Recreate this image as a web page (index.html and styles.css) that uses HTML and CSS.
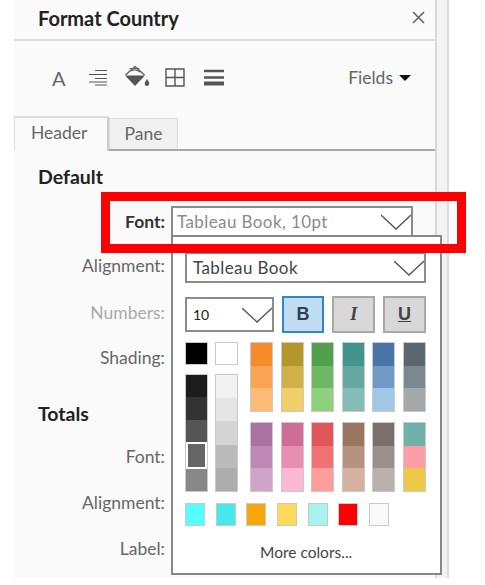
FILE: index.html
```html
<!DOCTYPE html>
<html lang="en">
<head>
    <meta charset="UTF-8">
    <title>Format Country</title>
    <link rel="stylesheet" href="styles.css">
</head>
<body>
<div class="shell">
    <div class="panel">
        <div class="panel-title">
            <h1>Format Country</h1>
            <svg class="close" width="13" height="13" viewBox="0 0 13 13"><path d="M1 1l11 11M12 1L1 12" stroke="#666" stroke-width="1.6" fill="none"/></svg>
        </div>
        <div class="toolbar">
            <span class="tool-a">A</span>
            <svg class="tool-align" width="18" height="17" viewBox="0 0 18 17"><path d="M6 1.500h12M0 5.500h18M6 9.500h12M0 13h18M6 16h12" stroke="#555" stroke-width="1.200" fill="none"/></svg>
            <svg class="tool-fill" width="26" height="22" viewBox="0 0 26 22"><path d="M1.500 10L11 1.500 20.500 10" fill="none" stroke="#666" stroke-width="1.500"/><path d="M5.500 3.500l10 0M7 6c3-2 6-1.500 9 1" fill="none" stroke="#666" stroke-width="1.200"/><path d="M1 10.500h20L11 21z" fill="#555"/><path d="M23 14c1.500 2.500 2.300 3.500 2.300 4.800a2.300 2.300 0 0 1-4.600 0c0-1.300.8-2.300 2.300-4.800z" fill="#555"/></svg>
            <svg class="tool-grid" width="20" height="19" viewBox="0 0 20 19"><path d="M1 1h18v17H1zM10 1v17M1 9.500h18" fill="none" stroke="#555" stroke-width="1.400"/></svg>
            <svg class="tool-lines" width="20" height="17" viewBox="0 0 20 17"><path d="M0 2h20M0 8.500h20" stroke="#555" stroke-width="2.400"/><path d="M0 14.500h20" stroke="#555" stroke-width="4"/></svg>
            <span class="fields">Fields</span>
            <svg class="fields-arrow" width="12" height="6" viewBox="0 0 12 6"><path d="M0 0h12L6 6z" fill="#111"/></svg>
        </div>
        <div class="tabs">
            <div class="tab active">Header</div>
            <div class="tab">Pane</div>
        </div>
        <div class="form">
            <h2 class="section-default">Default</h2>
            <div class="row row-font">
                <label class="strong">Font:</label>
                <div class="select font-select">Tableau Book, 10pt
                    <svg class="chevron" width="30" height="16" viewBox="0 0 30 16"><path d="M0 1l15 14L30 1" fill="none" stroke="#555" stroke-width="1.300"/></svg>
                </div>
            </div>
            <div class="row row-align"><label>Alignment:</label></div>
            <div class="row row-numbers"><label class="muted">Numbers:</label></div>
            <div class="row row-shading"><label>Shading:</label></div>
            <h2 class="section-totals">Totals</h2>
            <div class="row row-tfont"><label>Font:</label></div>
            <div class="row row-talign"><label>Alignment:</label></div>
            <div class="row row-tlabel"><label>Label:</label></div>
        </div>
    </div>
    <div class="strip"></div>
</div>

<div class="popup">
    <div class="select family-select">Tableau Book
        <svg class="chevron" width="30" height="16" viewBox="0 0 30 16"><path d="M0 1l15 14L30 1" fill="none" stroke="#555" stroke-width="1.300"/></svg>
    </div>
    <div class="style-row">
        <div class="select size-select">10
            <svg class="chevron" width="30" height="16" viewBox="0 0 30 16"><path d="M0 1l15 14L30 1" fill="none" stroke="#555" stroke-width="1.300"/></svg>
        </div>
        <div class="style-btn on bold">B</div>
        <div class="style-btn italic">I</div>
        <div class="style-btn under">U</div>
    </div>
    <div class="colors">
        <div class="greys">
            <div class="swatch black"></div>
            <div class="swatch white"></div>
            <div class="stack tall">
                <i class="g1"></i><i class="g2"></i><i class="g3"></i><i class="g4 picked"></i><i class="g5"></i>
            </div>
            <div class="stack tall">
                <i class="l1"></i><i class="l2"></i><i class="l3"></i><i class="l4"></i><i class="l5"></i>
            </div>
        </div>
        <div class="palette">
            <div class="stack"><i class="p1a"></i><i class="p1b"></i><i class="p1c"></i></div>
            <div class="stack"><i class="p2a"></i><i class="p2b"></i><i class="p2c"></i></div>
            <div class="stack"><i class="p3a"></i><i class="p3b"></i><i class="p3c"></i></div>
            <div class="stack"><i class="p4a"></i><i class="p4b"></i><i class="p4c"></i></div>
            <div class="stack"><i class="p5a"></i><i class="p5b"></i><i class="p5c"></i></div>
            <div class="stack"><i class="p6a"></i><i class="p6b"></i><i class="p6c"></i></div>
            <div class="stack"><i class="p7a"></i><i class="p7b"></i><i class="p7c"></i></div>
            <div class="stack"><i class="p8a"></i><i class="p8b"></i><i class="p8c"></i></div>
            <div class="stack"><i class="p9a"></i><i class="p9b"></i><i class="p9c"></i></div>
            <div class="stack"><i class="p10a"></i><i class="p10b"></i><i class="p10c"></i></div>
            <div class="stack"><i class="p11a"></i><i class="p11b"></i><i class="p11c"></i></div>
            <div class="stack"><i class="p12a"></i><i class="p12b"></i><i class="p12c"></i></div>
        </div>
    </div>
    <div class="recent">
        <div class="chip r1"></div>
        <div class="chip r2"></div>
        <div class="chip r3"></div>
        <div class="chip r4"></div>
        <div class="chip r5"></div>
        <div class="chip r6"></div>
        <div class="chip r7"></div>
    </div>
    <div class="more">More colors...</div>
</div>

<div class="highlight"></div>
</body>
</html>
```

FILE: styles.css
```css
* {
    box-sizing: border-box;
    margin: 0;
    padding: 0;
}

body {
    font-family: 'Lato', 'Liberation Sans', sans-serif;
    width: 485px;
    height: 585px;
    overflow: hidden;
    background-color: #fff;
    color: #666;
    position: relative;
}

.shell {
    display: flex;
    margin-left: 14px;
    height: 578px;
}

.panel {
    width: 423px;
    background-color: #fafafa;
    border-right: 2px solid #d8d8d8;
}

.strip {
    width: 12px;
    background-color: #f3f3f3;
    border-right: 2px solid #dcdcdc;
}

.panel-title {
    height: 41px;
    display: flex;
    justify-content: space-between;
    align-items: center;
    padding: 0 10px 4px 24px;
    border-bottom: 2px solid #dedede;
}

.panel-title h1 {
    font-size: 20px;
    font-weight: 700;
    color: #222;
}

/* toolbar */
.toolbar {
    height: 76px;
    display: flex;
    align-items: center;
    padding: 0 24px 3px 38px;
}

.tool-a {
    font-size: 20px;
    width: 12px;
    color: #666;
}

.tool-align { margin-left: 25px; }
.tool-fill { margin-left: 17px; margin-bottom: 4px; }
.tool-grid { margin-left: 15px; }
.tool-lines { margin-left: 19px; }

.fields {
    margin-left: auto;
    font-size: 17.5px;
    color: #666;
}

.fields-arrow {
    margin-left: 6px;
}

/* tabs */
.tabs {
    display: flex;
    align-items: flex-end;
    height: 34px;
    border-bottom: 2px solid #a8a8a8;
}

.tab {
    width: 69px;
    height: 31px;
    font-size: 17.5px;
    text-align: center;
    line-height: 30px;
    background-color: #f0f0f0;
    border: 1px solid #ddd;
    border-bottom: none;
    color: #666;
}

.tab.active {
    width: 95px;
    height: 35px;
    margin-bottom: -2px;
    background-color: #fafafa;
    border-left: 1px solid #ddd;
    border-right: 2px solid #ccc;
    border-top: 2px solid #ddd;
    text-align: left;
    padding-left: 16px;
}

/* form rows */
.form {
    padding-top: 16px;
}

.form h2 {
    font-size: 19.5px;
    font-weight: 700;
    color: #222;
    padding-left: 24px;
    line-height: 20px;
}

.row {
    display: flex;
    align-items: center;
    height: 30px;
}

.row label {
    width: 151px;
    font-size: 17.5px;
    text-align: right;
    color: #666;
    flex-shrink: 0;
}

.row label.strong {
    font-weight: 700;
    color: #333;
}

.row label.muted {
    color: #aaa;
}

.row-font { margin-top: 19px; }
.row-align { margin-top: 14px; }
.row-numbers { margin-top: 17px; }
.row-shading { margin-top: 15px; }
.section-totals { margin-top: 32px; }
.row-tfont { margin-top: 17px; }
.row-talign { margin-top: 16px; }
.row-tlabel { margin-top: 16px; }

.select {
    position: relative;
    background-color: #fff;
    border: 2px solid #8c8c8c;
    font-size: 17px;
    color: #444;
    display: flex;
    align-items: center;
}

.chevron {
    position: absolute;
    right: 0;
    top: 6px;
}

.font-select {
    width: 242px;
    height: 31px;
    margin-left: 6px;
    padding-left: 4px;
    color: #8a8a8a;
    letter-spacing: 0.4px;
}

/* popup that opens under the font select */
.popup {
    position: absolute;
    left: 171px;
    top: 235px;
    width: 271px;
    height: 340px;
    background-color: #fff;
    border: 2px solid #888;
    padding: 15px 14px 0 12px;
}

.family-select {
    width: 241px;
    height: 31px;
    padding-left: 6px;
    letter-spacing: 0.4px;
}

.style-row {
    display: flex;
    align-items: center;
    margin-top: 13px;
    height: 37px;
}

.size-select {
    width: 89px;
    height: 35px;
    padding-left: 6px;
    font-size: 14px;
    color: #222;
}

.size-select .chevron {
    top: 8px;
}

.style-btn {
    width: 43px;
    height: 37px;
    margin-left: 8px;
    background-color: #d8d8d8;
    border: 2px solid #a8a8a8;
    font-family: 'Liberation Sans', sans-serif;
    font-size: 18px;
    font-weight: 700;
    color: #2f3f55;
    display: flex;
    align-items: center;
    justify-content: center;
}

.style-btn.on {
    background-color: #c0dcf3;
    border-color: #2f86c9;
}

.style-btn.italic {
    font-family: 'Liberation Serif', serif;
    font-style: italic;
    color: #444;
}

.style-btn.under {
    text-decoration: underline;
    color: #444;
}

/* colour swatches */
.colors {
    display: flex;
    margin-top: 9px;
}

.greys {
    display: grid;
    grid-template-columns: 23px 23px;
    grid-template-rows: 23px 118px;
    column-gap: 7px;
    row-gap: 9px;
}

.palette {
    display: grid;
    grid-template-columns: repeat(6, 23px);
    grid-template-rows: 70px 70px;
    column-gap: 7.6px;
    row-gap: 10px;
    margin-left: 12px;
}

.swatch, .stack, .chip {
    border: 1.5px solid #c9c9c9;
}

.stack {
    display: flex;
    flex-direction: column;
}

.stack i {
    flex: 1;
    display: block;
}

.black { background-color: #000; }
.white { background-color: #fff; }

.g1 { background-color: #1c1c1c; }
.g2 { background-color: #333; }
.g3 { background-color: #555; }
.g4 { background-color: #666; }
.g5 { background-color: #888; }
.picked { border: 2px solid #fff; }

.l1 { background-color: #f2f2f2; }
.l2 { background-color: #e5e5e5; }
.l3 { background-color: #d4d4d4; }
.l4 { background-color: #bbb; }
.l5 { background-color: #adadad; }

.p1a { background-color: #f58b2a; }
.p1b { background-color: #fba354; }
.p1c { background-color: #fdbb78; }
.p2a { background-color: #b5962b; }
.p2b { background-color: #d1b048; }
.p2c { background-color: #f0ce68; }
.p3a { background-color: #52a04f; }
.p3b { background-color: #6fb965; }
.p3c { background-color: #8dd07e; }
.p4a { background-color: #41958f; }
.p4b { background-color: #65a8a2; }
.p4c { background-color: #86bcb6; }
.p5a { background-color: #4a75a8; }
.p5b { background-color: #7099c5; }
.p5c { background-color: #a0c8e6; }
.p6a { background-color: #5c6670; }
.p6b { background-color: #7c8890; }
.p6c { background-color: #a4aaab; }
.p7a { background-color: #ab739f; }
.p7b { background-color: #bd8ab5; }
.p7c { background-color: #d0a4c9; }
.p8a { background-color: #d06d96; }
.p8b { background-color: #e68fb1; }
.p8c { background-color: #fbb8d2; }
.p9a { background-color: #e15759; }
.p9b { background-color: #f17274; }
.p9c { background-color: #ff9d9a; }
.p10a { background-color: #9c7561; }
.p10b { background-color: #b69280; }
.p10c { background-color: #d5b1a1; }
.p11a { background-color: #79706e; }
.p11b { background-color: #998f8c; }
.p11c { background-color: #bab0ac; }
.p12a { background-color: #6fb0aa; }
.p12b { background-color: #ff9da7; }
.p12c { background-color: #edc948; }

.recent {
    display: flex;
    gap: 10.7px;
    margin-top: 11px;
}

.chip {
    width: 20px;
    height: 23px;
}

.r1 { background-color: #55ffff; }
.r2 { background-color: #47e8ec; }
.r3 { background-color: #f7a70a; }
.r4 { background-color: #ffdb5c; }
.r5 { background-color: #a5f3ea; }
.r6 { background-color: #ff0000; }
.r7 { background-color: #fafafa; }

.more {
    margin-top: 17px;
    padding-left: 75px;
    font-size: 15.5px;
    color: #444;
}

/* red callout drawn over the screenshot */
.highlight {
    position: absolute;
    left: 101px;
    top: 192px;
    width: 365px;
    height: 61px;
    border: 9px solid #ff0000;
}
```
